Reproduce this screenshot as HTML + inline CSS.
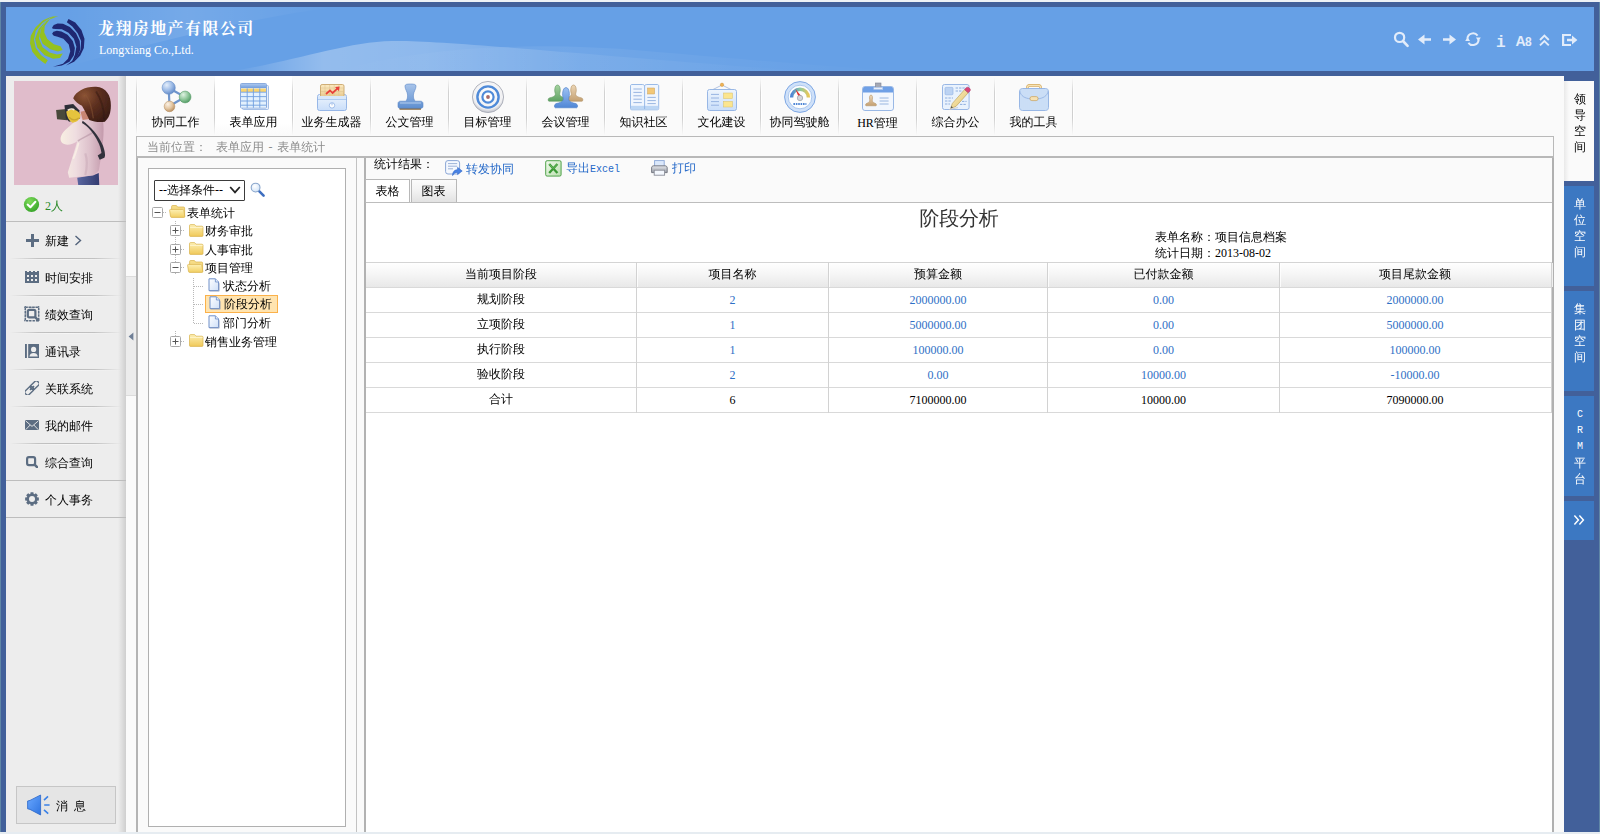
<!DOCTYPE html>
<html lang="zh-CN">
<head>
<meta charset="utf-8">
<title>龙翔房地产有限公司</title>
<style>
*{box-sizing:border-box;margin:0;padding:0}
html,body{width:1600px;height:834px;overflow:hidden}
body{position:relative;background:#42609a;font-family:"Liberation Serif","WenQuanYi Zen Hei","Noto Sans CJK SC",sans-serif;font-size:12px;line-height:14px;color:#000}
.abs{position:absolute}
#topstrip{left:0;top:0;width:1600px;height:2px;background:#eef2f6}
#botstrip{left:0;top:832px;width:1600px;height:2px;background:#e6ecf1}
#leftedge{left:0;top:2px;width:1px;height:830px;background:#5f86a6}
#rightedge{left:1599px;top:2px;width:1px;height:830px;background:#5f86a6}
#header{left:6px;top:7px;width:1588px;height:64px;background:#66a0e6;overflow:hidden}
#sidebar{left:6px;top:76px;width:120px;height:756px;background:#ededed}
#sideshadow{left:112px;top:0;width:8px;height:756px;background:linear-gradient(90deg,rgba(0,0,0,0),rgba(0,0,0,.13))}
#main{left:126px;top:76px;width:1438px;height:756px;background:#fafafa}
.t{position:absolute;white-space:nowrap;line-height:14px}
table th{font-weight:normal;background:linear-gradient(180deg,#fdfdfd,#f3f3f3 55%,#e6e6e6);border:1px solid #d2d2d2;padding:0;line-height:14px;vertical-align:middle}
table td{border:1px solid #dcdcdc;padding:0;text-align:center;color:#2a6fca;line-height:14px;vertical-align:middle;background:#fff}
table td.c0,table tr.tot td{color:#000}
</style>
</head>
<body>
<div id="topstrip" class="abs"></div>
<div id="leftedge" class="abs"></div>
<div id="rightedge" class="abs"></div>
<div id="header" class="abs"><svg class="abs" style="left:0;top:0" width="1588" height="64" viewBox="0 0 1588 64">
<defs>
<linearGradient id="sw1" gradientUnits="userSpaceOnUse" x1="226" y1="0" x2="800" y2="0"><stop offset="0" stop-color="#fff" stop-opacity="0"/><stop offset=".16" stop-color="#fff" stop-opacity=".30"/><stop offset=".34" stop-color="#fff" stop-opacity=".26"/><stop offset=".6" stop-color="#fff" stop-opacity=".08"/><stop offset="1" stop-color="#fff" stop-opacity="0"/></linearGradient>
<linearGradient id="sw2" gradientUnits="userSpaceOnUse" x1="60" y1="0" x2="330" y2="0"><stop offset="0" stop-color="#fff" stop-opacity="0"/><stop offset=".45" stop-color="#fff" stop-opacity=".10"/><stop offset="1" stop-color="#fff" stop-opacity="0"/></linearGradient>
<linearGradient id="sw3" gradientUnits="userSpaceOnUse" x1="330" y1="0" x2="900" y2="0"><stop offset="0" stop-color="#fff" stop-opacity="0"/><stop offset=".4" stop-color="#fff" stop-opacity=".07"/><stop offset="1" stop-color="#fff" stop-opacity="0"/></linearGradient>
</defs>
<path d="M60 0 L330 0 C250 10 160 32 60 60 Z" fill="url(#sw2)"/>
<path d="M226 64 C290 54 340 35 386 34 C440 33 600 50 800 64 Z" fill="url(#sw1)"/>
<path d="M330 64 C420 40 520 34 640 44 C760 54 820 60 900 64 Z" fill="url(#sw3)"/>
</svg>
<svg class="abs" style="left:14px;top:1px" width="80" height="64" viewBox="0 0 1042 834">
<g fill="#95c11f">
<polygon points="470,103 400,118 300,160 200,255 140,360 130,460 160,570 230,655 330,730 362,680 275,615 205,520 182,410 205,300 290,195 390,130"/>
<polygon points="335,172 245,275 195,400 225,515 320,615 430,662 520,650 558,592 480,606 385,580 295,510 248,400 265,285"/>
<polygon points="500,104 420,118 340,175 272,275 256,370 295,465 395,538 495,568 555,547 528,500 440,474 355,405 316,320 322,235 385,150"/>
</g>
<g fill="#1f2872">
<polygon points="418,335 435,310 480,298 540,305 620,350 688,430 715,520 702,615 645,700 545,750 430,766 560,725 625,660 655,565 635,475 565,402 490,375 440,360"/>
<polygon points="418,255 440,222 490,203 560,205 650,248 730,330 778,430 786,540 745,640 670,712 715,610 735,505 702,400 632,322 545,277 465,275 425,270"/>
<polygon points="632,142 720,190 800,288 840,400 832,520 785,620 705,700 600,748 735,648 790,545 796,430 752,330 682,242 610,186"/>
</g>
</svg>
<div class="t" style="left:92px;top:11px;font:bold 16px/22px 'Liberation Serif','Noto Serif CJK SC',serif;color:#fff;letter-spacing:1.4px">龙翔房地产有限公司</div>
<div class="t" style="left:93px;top:35px;font:12px/16px 'Liberation Serif',serif;color:#fff">Longxiang Co.,Ltd.</div>
<svg class="abs" style="left:1380px;top:20px" width="208" height="28" viewBox="1386 27 208 28" fill="none" stroke="#e2ecfa" stroke-width="2.2">
<circle cx="1399.6" cy="37.4" r="4.6"/><path d="M1403 41 L1407.6 45.8" stroke-linecap="round" stroke-width="2.6"/>
<g fill="#e2ecfa" stroke="none">
<path d="M1418 39.5 L1424.5 34.6 L1424.5 38.2 L1431 38.2 L1431 40.8 L1424.5 40.8 L1424.5 44.4 Z"/>
<path d="M1456 39.5 L1449.5 34.6 L1449.5 38.2 L1443 38.2 L1443 40.8 L1449.5 40.8 L1449.5 44.4 Z"/>
<path d="M1480.8 37.5 L1476 37.5 L1478.4 41.4 Z M1465.2 41 L1470 41 L1467.6 37.1 Z"/>
<path d="M1562 34 L1571 34 L1571 36 L1564.2 36 L1564.2 44 L1571 44 L1571 46 L1562 46 Z"/>
<path d="M1567 38.8 L1572 38.8 L1572 35.6 L1577.4 40 L1572 44.4 L1572 41.2 L1567 41.2 Z"/>
</g>
<path d="M1467.4 38.6 A5.7 5.7 0 0 1 1477.6 35.6 M1478.6 39.8 A5.7 5.7 0 0 1 1468.4 42.8" stroke-width="2"/>
<path d="M1540 40 L1544.4 35.6 L1548.8 40 M1540 45.4 L1544.4 41 L1548.8 45.4" stroke-width="1.9"/>
</svg>
<div class="t" style="left:1490px;top:27px;font:bold 16px/18px 'Liberation Mono',monospace;color:#e2ecfa">i</div>
<div class="t" style="left:1509.5px;top:25px;font:bold 14px/18px 'Liberation Sans',sans-serif;color:#e2ecfa;letter-spacing:-.6px">A<span style="font-size:12px">8</span></div>
</div>
<div id="sidebar" class="abs"><div id="sideshadow" class="abs"></div><svg class="abs" style="left:8px;top:5px" width="104" height="104" viewBox="30 22 773 773">
<defs>
<radialGradient id="hair" cx=".3" cy=".25" r=".85"><stop offset="0" stop-color="#8c5434"/><stop offset=".45" stop-color="#5e3020"/><stop offset="1" stop-color="#3a1c14"/></radialGradient>
<linearGradient id="jk" x1="0" y1="0" x2="1" y2="0"><stop offset="0" stop-color="#f8efe2"/><stop offset=".35" stop-color="#efdde0"/><stop offset=".7" stop-color="#dcbfca"/><stop offset="1" stop-color="#c49aac"/></linearGradient>
<linearGradient id="jeans" x1="0" y1="0" x2="1" y2="0"><stop offset="0" stop-color="#5a66a0"/><stop offset="1" stop-color="#333c70"/></linearGradient>
<filter id="bl" x="-5%" y="-5%" width="110%" height="110%"><feGaussianBlur stdDeviation="5"/></filter>
</defs>
<rect x="30" y="22" width="773" height="773" fill="#e0bccb"/>
<g filter="url(#bl)">
<path d="M500 742 L620 722 L660 705 L664 800 L508 800 Z" fill="url(#jeans)"/>
<path d="M520 300 L690 305 C705 400 690 520 660 690 L620 722 L440 742 L430 700 C455 620 480 540 500 470 C460 500 410 505 385 480 C365 450 380 410 430 370 C455 345 480 320 520 300 Z" fill="url(#jk)"/>
<path d="M505 468 C545 440 585 428 625 398" stroke="#b08e9e" stroke-width="12" fill="none" opacity=".55"/>
<path d="M560 560 C580 620 570 680 560 720" stroke="#c8a8b6" stroke-width="16" fill="none" opacity=".5"/>
<path d="M470 600 C490 560 500 520 510 480" stroke="#fff8e8" stroke-width="14" fill="none" opacity=".6"/>
<path d="M525 250 L575 240 L590 305 L540 312 Z" fill="#c98673"/>
<path d="M540 318 C600 360 660 430 690 500 C705 540 712 580 702 592 L667 607 L652 575 L680 558 C675 500 640 440 600 390 C575 360 555 345 535 335 Z" fill="#33333d"/>
<path d="M343 238 L420 230 L425 314 L350 307 Z" fill="#48483a"/>
<path d="M405 203 L470 193 L515 240 L520 300 L440 324 L415 300 Z" fill="#2f2f38"/>
<path d="M418 250 C450 222 502 232 522 270 C528 302 502 328 465 333 C438 316 424 290 418 250 Z" fill="#e6c33c"/>
<path d="M440 290 C460 315 490 318 512 296" stroke="#b8922a" stroke-width="10" fill="none" opacity=".6"/>
<path d="M430 240 C445 225 470 228 478 238" stroke="#f4e6d8" stroke-width="12" fill="none"/>
<path d="M470 150 C490 98 560 62 640 65 C715 70 752 130 750 205 C750 262 735 302 705 324 C668 332 620 324 590 312 C575 282 560 246 535 206 C505 190 485 175 470 150 Z" fill="url(#hair)"/>
<path d="M560 120 C590 160 610 230 620 300" stroke="#8a5636" stroke-width="10" fill="none" opacity=".5"/>
<path d="M640 100 C680 160 700 230 700 310" stroke="#2e1610" stroke-width="14" fill="none" opacity=".45"/>
</g>
</svg>
<svg class="abs" style="left:17px;top:120px" width="17" height="17" viewBox="0 0 17 17"><defs><radialGradient id="gc" cx=".4" cy=".3" r=".8"><stop offset="0" stop-color="#7fdc5a"/><stop offset="1" stop-color="#2f9e24"/></radialGradient></defs><circle cx="8.5" cy="8.5" r="7.6" fill="url(#gc)"/><path d="M4.6 8.6 L7.4 11.2 L12.4 5.8" fill="none" stroke="#fff" stroke-width="2" stroke-linecap="round" stroke-linejoin="round"/></svg>
<div class="t" style="left:39px;top:123px;color:#2a8a2a">2人</div>
<div class="abs" style="left:0;top:144.5px;width:120px;height:1px;background:#bdbdbd"></div>
<div class="abs" style="left:4px;top:182.0px;width:112px;height:1px;background:linear-gradient(90deg,rgba(190,190,190,0),#c2c2c2 25%,#bcbcbc 50%,#c2c2c2 75%,rgba(190,190,190,0))"></div>
<div class="abs" style="left:4px;top:183.0px;width:112px;height:1px;background:linear-gradient(90deg,rgba(255,255,255,0),rgba(255,255,255,.5) 50%,rgba(255,255,255,0))"></div>
<div class="abs" style="left:4px;top:219.0px;width:112px;height:1px;background:linear-gradient(90deg,rgba(190,190,190,0),#c2c2c2 25%,#bcbcbc 50%,#c2c2c2 75%,rgba(190,190,190,0))"></div>
<div class="abs" style="left:4px;top:220.0px;width:112px;height:1px;background:linear-gradient(90deg,rgba(255,255,255,0),rgba(255,255,255,.5) 50%,rgba(255,255,255,0))"></div>
<div class="abs" style="left:4px;top:256.0px;width:112px;height:1px;background:linear-gradient(90deg,rgba(190,190,190,0),#c2c2c2 25%,#bcbcbc 50%,#c2c2c2 75%,rgba(190,190,190,0))"></div>
<div class="abs" style="left:4px;top:257.0px;width:112px;height:1px;background:linear-gradient(90deg,rgba(255,255,255,0),rgba(255,255,255,.5) 50%,rgba(255,255,255,0))"></div>
<div class="abs" style="left:4px;top:293.0px;width:112px;height:1px;background:linear-gradient(90deg,rgba(190,190,190,0),#c2c2c2 25%,#bcbcbc 50%,#c2c2c2 75%,rgba(190,190,190,0))"></div>
<div class="abs" style="left:4px;top:294.0px;width:112px;height:1px;background:linear-gradient(90deg,rgba(255,255,255,0),rgba(255,255,255,.5) 50%,rgba(255,255,255,0))"></div>
<div class="abs" style="left:4px;top:330.0px;width:112px;height:1px;background:linear-gradient(90deg,rgba(190,190,190,0),#c2c2c2 25%,#bcbcbc 50%,#c2c2c2 75%,rgba(190,190,190,0))"></div>
<div class="abs" style="left:4px;top:331.0px;width:112px;height:1px;background:linear-gradient(90deg,rgba(255,255,255,0),rgba(255,255,255,.5) 50%,rgba(255,255,255,0))"></div>
<div class="abs" style="left:4px;top:367.0px;width:112px;height:1px;background:linear-gradient(90deg,rgba(190,190,190,0),#c2c2c2 25%,#bcbcbc 50%,#c2c2c2 75%,rgba(190,190,190,0))"></div>
<div class="abs" style="left:4px;top:368.0px;width:112px;height:1px;background:linear-gradient(90deg,rgba(255,255,255,0),rgba(255,255,255,.5) 50%,rgba(255,255,255,0))"></div>
<div class="abs" style="left:0;top:404.0px;width:120px;height:1px;background:#bdbdbd"></div>
<div class="abs" style="left:0;top:440.5px;width:120px;height:1px;background:#bdbdbd"></div>
<svg class="abs" style="left:20px;top:158px" width="13" height="13" viewBox="0 0 13 13"><path d="M5 0h3v5h5v3h-5v5h-3v-5h-5v-3h5z" fill="#5c6d82"/></svg>
<div class="t" style="left:39px;top:158px;">新建</div>
<svg class="abs" style="left:68px;top:159px" width="8" height="11" viewBox="0 0 8 11"><path d="M1.5 1 L6.5 5.5 L1.5 10" fill="none" stroke="#52627a" stroke-width="1.4"/></svg>
<svg class="abs" style="left:19px;top:195px" width="14" height="12" viewBox="0 0 14 12"><path d="M0 0h2v1h2v-1h2v1h2v-1h2v1h2v-1h2v12h-14z" fill="#5c6d82"/><g fill="#ededed"><rect x="2" y="4" width="2" height="2"/><rect x="6" y="4" width="2" height="2"/><rect x="10" y="4" width="2" height="2"/><rect x="2" y="8" width="2" height="2"/><rect x="6" y="8" width="2" height="2"/><rect x="10" y="8" width="2" height="2"/></g></svg>
<div class="t" style="left:39px;top:195px;">时间安排</div>
<svg class="abs" style="left:18px;top:230px" width="16" height="16" viewBox="0 0 16 16"><rect x="1.3" y="1.3" width="13.4" height="13.4" fill="none" stroke="#5c6d82" stroke-width="1.5" stroke-dasharray="2.4 1"/><path d="M0 1.3h16M0 14.7h7M1.3 0v16M14.7 0v8" stroke="#5c6d82" stroke-width="1.1" stroke-dasharray="1 2.4"/><rect x="3.8" y="3.8" width="7.6" height="7.6" rx="1.6" fill="none" stroke="#5c6d82" stroke-width="2.2"/><path d="M10.6 10.6 L15 15" stroke="#5c6d82" stroke-width="2.4"/></svg>
<div class="t" style="left:39px;top:232px;">绩效查询</div>
<svg class="abs" style="left:19px;top:268px" width="14" height="14" viewBox="0 0 14 14"><rect x="0" y="0" width="1.9" height="14" fill="#5c6d82"/><rect x="3.2" y="0" width="10.8" height="14" fill="#5c6d82"/><circle cx="8.6" cy="5.4" r="2.6" fill="#ededed"/><path d="M4.4 12.6 C4.8 10 6.4 9 8.6 9 C10.8 9 12.4 10 12.8 12.6 Z" fill="#ededed"/></svg>
<div class="t" style="left:39px;top:269px;">通讯录</div>
<svg class="abs" style="left:19px;top:305px" width="14" height="14" viewBox="0 0 14 14"><g transform="rotate(-45 7 7)" fill="none" stroke="#5c6d82" stroke-width="1.4"><rect x="-1.6" y="4.4" width="9.4" height="5.2" rx="1.6"/><rect x="6.2" y="4.4" width="9.4" height="5.2" rx="1.6"/><path d="M4.2 7h5.6" stroke-width="1.8"/></g></svg>
<div class="t" style="left:39px;top:306px;">关联系统</div>
<svg class="abs" style="left:19px;top:344px" width="14" height="10.4" viewBox="0 0 14 10.4"><rect width="14" height="10.4" rx=".8" fill="#5c6d82"/><path d="M.6 .8 L7 6.4 L13.4 .8 M.6 9.8 L5.2 5 M13.4 9.8 L8.8 5" fill="none" stroke="#ededed" stroke-width=".9"/></svg>
<div class="t" style="left:39px;top:343px;">我的邮件</div>
<svg class="abs" style="left:20px;top:380px" width="12.4" height="12.4" viewBox="0 0 12.4 12.4"><rect x="1.1" y="1.1" width="8" height="8" rx="1.8" fill="none" stroke="#5c6d82" stroke-width="2.2"/><path d="M8.6 8.6 L11.4 11.4" stroke="#5c6d82" stroke-width="2.6" stroke-linecap="round"/></svg>
<div class="t" style="left:39px;top:380px;">综合查询</div>
<svg class="abs" style="left:19px;top:416px" width="14" height="14" viewBox="0 0 14 14"><polygon points="13.86,5.61 13.86,8.39 12.01,8.72 11.76,9.33 12.83,10.87 10.87,12.83 9.33,11.76 8.72,12.01 8.39,13.86 5.61,13.86 5.28,12.01 4.67,11.76 3.13,12.83 1.17,10.87 2.24,9.33 1.99,8.72 0.14,8.39 0.14,5.61 1.99,5.28 2.24,4.67 1.17,3.13 3.13,1.17 4.67,2.24 5.28,1.99 5.61,0.14 8.39,0.14 8.72,1.99 9.33,2.24 10.87,1.17 12.83,3.13 11.76,4.67 12.01,5.28" fill="#5c6d82"/><circle cx="7" cy="7" r="3" fill="#ededed"/></svg>
<div class="t" style="left:39px;top:417px;">个人事务</div>
<div class="abs" style="left:10px;top:710px;width:100px;height:38px;border:1px solid #c6c6c6;background:#e5e5e5"></div>
<svg class="abs" style="left:21px;top:718px" width="24" height="22" viewBox="0 0 24 22"><defs><linearGradient id="spk" x1="0" y1="0" x2="1" y2="1"><stop offset="0" stop-color="#6aa8ff"/><stop offset="1" stop-color="#2f74e0"/></linearGradient></defs><path d="M.6 7 L3 6.4 L13.6 1 L13.6 21 L3 15.4 L.6 14.8 Z" fill="url(#spk)" stroke="#2b66c8" stroke-width=".8" stroke-linejoin="round"/><path d="M17 6.2 L21 2.4 M17.2 11 H22.6 M17 15.8 L21.2 19.6" stroke="#3a80e6" stroke-width="1.6" fill="none"/></svg>
<div class="t" style="left:50px;top:723px;font-family:'Liberation Sans','WenQuanYi Zen Hei',sans-serif;letter-spacing:6px">消息</div></div>
<div id="main" class="abs"><div class="abs" style="left:89px;top:0px;width:77px;height:59px;background:linear-gradient(180deg,#fff,#fff 80%,#fafafa)"></div>
<div class="abs" style="left:10px;top:2px;width:1px;height:57px;background:linear-gradient(180deg,rgba(200,200,200,0),#d2d2d2 25%,#cfcfcf 70%,rgba(200,200,200,0))"></div>
<div class="abs" style="left:11px;top:2px;width:1px;height:57px;background:linear-gradient(180deg,rgba(255,255,255,0),#fff 30%,#fff 70%,rgba(255,255,255,0))"></div>
<div class="abs" style="left:88px;top:2px;width:1px;height:57px;background:linear-gradient(180deg,rgba(200,200,200,0),#d2d2d2 25%,#cfcfcf 70%,rgba(200,200,200,0))"></div>
<div class="abs" style="left:89px;top:2px;width:1px;height:57px;background:linear-gradient(180deg,rgba(255,255,255,0),#fff 30%,#fff 70%,rgba(255,255,255,0))"></div>
<div class="abs" style="left:166px;top:2px;width:1px;height:57px;background:linear-gradient(180deg,rgba(200,200,200,0),#d2d2d2 25%,#cfcfcf 70%,rgba(200,200,200,0))"></div>
<div class="abs" style="left:167px;top:2px;width:1px;height:57px;background:linear-gradient(180deg,rgba(255,255,255,0),#fff 30%,#fff 70%,rgba(255,255,255,0))"></div>
<div class="abs" style="left:244px;top:2px;width:1px;height:57px;background:linear-gradient(180deg,rgba(200,200,200,0),#d2d2d2 25%,#cfcfcf 70%,rgba(200,200,200,0))"></div>
<div class="abs" style="left:245px;top:2px;width:1px;height:57px;background:linear-gradient(180deg,rgba(255,255,255,0),#fff 30%,#fff 70%,rgba(255,255,255,0))"></div>
<div class="abs" style="left:322px;top:2px;width:1px;height:57px;background:linear-gradient(180deg,rgba(200,200,200,0),#d2d2d2 25%,#cfcfcf 70%,rgba(200,200,200,0))"></div>
<div class="abs" style="left:323px;top:2px;width:1px;height:57px;background:linear-gradient(180deg,rgba(255,255,255,0),#fff 30%,#fff 70%,rgba(255,255,255,0))"></div>
<div class="abs" style="left:400px;top:2px;width:1px;height:57px;background:linear-gradient(180deg,rgba(200,200,200,0),#d2d2d2 25%,#cfcfcf 70%,rgba(200,200,200,0))"></div>
<div class="abs" style="left:401px;top:2px;width:1px;height:57px;background:linear-gradient(180deg,rgba(255,255,255,0),#fff 30%,#fff 70%,rgba(255,255,255,0))"></div>
<div class="abs" style="left:478px;top:2px;width:1px;height:57px;background:linear-gradient(180deg,rgba(200,200,200,0),#d2d2d2 25%,#cfcfcf 70%,rgba(200,200,200,0))"></div>
<div class="abs" style="left:479px;top:2px;width:1px;height:57px;background:linear-gradient(180deg,rgba(255,255,255,0),#fff 30%,#fff 70%,rgba(255,255,255,0))"></div>
<div class="abs" style="left:556px;top:2px;width:1px;height:57px;background:linear-gradient(180deg,rgba(200,200,200,0),#d2d2d2 25%,#cfcfcf 70%,rgba(200,200,200,0))"></div>
<div class="abs" style="left:557px;top:2px;width:1px;height:57px;background:linear-gradient(180deg,rgba(255,255,255,0),#fff 30%,#fff 70%,rgba(255,255,255,0))"></div>
<div class="abs" style="left:634px;top:2px;width:1px;height:57px;background:linear-gradient(180deg,rgba(200,200,200,0),#d2d2d2 25%,#cfcfcf 70%,rgba(200,200,200,0))"></div>
<div class="abs" style="left:635px;top:2px;width:1px;height:57px;background:linear-gradient(180deg,rgba(255,255,255,0),#fff 30%,#fff 70%,rgba(255,255,255,0))"></div>
<div class="abs" style="left:712px;top:2px;width:1px;height:57px;background:linear-gradient(180deg,rgba(200,200,200,0),#d2d2d2 25%,#cfcfcf 70%,rgba(200,200,200,0))"></div>
<div class="abs" style="left:713px;top:2px;width:1px;height:57px;background:linear-gradient(180deg,rgba(255,255,255,0),#fff 30%,#fff 70%,rgba(255,255,255,0))"></div>
<div class="abs" style="left:790px;top:2px;width:1px;height:57px;background:linear-gradient(180deg,rgba(200,200,200,0),#d2d2d2 25%,#cfcfcf 70%,rgba(200,200,200,0))"></div>
<div class="abs" style="left:791px;top:2px;width:1px;height:57px;background:linear-gradient(180deg,rgba(255,255,255,0),#fff 30%,#fff 70%,rgba(255,255,255,0))"></div>
<div class="abs" style="left:868px;top:2px;width:1px;height:57px;background:linear-gradient(180deg,rgba(200,200,200,0),#d2d2d2 25%,#cfcfcf 70%,rgba(200,200,200,0))"></div>
<div class="abs" style="left:869px;top:2px;width:1px;height:57px;background:linear-gradient(180deg,rgba(255,255,255,0),#fff 30%,#fff 70%,rgba(255,255,255,0))"></div>
<div class="abs" style="left:946px;top:2px;width:1px;height:57px;background:linear-gradient(180deg,rgba(200,200,200,0),#d2d2d2 25%,#cfcfcf 70%,rgba(200,200,200,0))"></div>
<div class="abs" style="left:947px;top:2px;width:1px;height:57px;background:linear-gradient(180deg,rgba(255,255,255,0),#fff 30%,#fff 70%,rgba(255,255,255,0))"></div>
<svg class="abs" style="left:0;top:0" width="1000" height="60" viewBox="126 76 1000 60"><defs>
<radialGradient id="sB" cx=".35" cy=".3" r=".75"><stop offset="0" stop-color="#e4eefb"/><stop offset=".55" stop-color="#9dbbe6"/><stop offset="1" stop-color="#5f87c6"/></radialGradient>
<radialGradient id="sG" cx=".35" cy=".3" r=".75"><stop offset="0" stop-color="#dff2e2"/><stop offset=".55" stop-color="#8fc79a"/><stop offset="1" stop-color="#4f9a62"/></radialGradient>
<radialGradient id="sT" cx=".35" cy=".3" r=".75"><stop offset="0" stop-color="#fbf1e4"/><stop offset=".55" stop-color="#e3c6a2"/><stop offset="1" stop-color="#b98d5e"/></radialGradient>
<linearGradient id="bh" x1="0" y1="0" x2="0" y2="1"><stop offset="0" stop-color="#a9c6ee"/><stop offset="1" stop-color="#6f9bdc"/></linearGradient>
<linearGradient id="lb" x1="0" y1="0" x2="0" y2="1"><stop offset="0" stop-color="#eef5fd"/><stop offset="1" stop-color="#c9defa"/></linearGradient>
<linearGradient id="st" x1="0" y1="0" x2="0" y2="1"><stop offset="0" stop-color="#a8c4ea"/><stop offset="1" stop-color="#5f8fd0"/></linearGradient>
<linearGradient id="tan" x1="0" y1="0" x2="0" y2="1"><stop offset="0" stop-color="#fbe9c0"/><stop offset="1" stop-color="#e9c98c"/></linearGradient>
<radialGradient id="tg" cx=".5" cy=".4" r=".6"><stop offset="0" stop-color="#ffffff"/><stop offset=".8" stop-color="#f0f0f2"/><stop offset="1" stop-color="#b9bcc6"/></radialGradient>
<linearGradient id="arc" x1="0" y1="0" x2="1" y2="0"><stop offset="0" stop-color="#4f86d6"/><stop offset=".5" stop-color="#8cc9a0"/><stop offset="1" stop-color="#e7c85a"/></linearGradient>
<linearGradient id="pGreen" x1="0" y1="0" x2="0" y2="1"><stop offset="0" stop-color="#a6d3a0"/><stop offset="1" stop-color="#5fa263"/></linearGradient>
<linearGradient id="pTan" x1="0" y1="0" x2="0" y2="1"><stop offset="0" stop-color="#ecd6b6"/><stop offset="1" stop-color="#c4a072"/></linearGradient>
<linearGradient id="pBlue" x1="0" y1="0" x2="0" y2="1"><stop offset="0" stop-color="#9cc0f2"/><stop offset="1" stop-color="#4f86d6"/></linearGradient>
<linearGradient id="pencil" x1="0" y1="0" x2="1" y2="1"><stop offset="0" stop-color="#fdf3c8"/><stop offset="1" stop-color="#e2c069"/></linearGradient>
</defs><g><path d="M168.7 88 L169.5 106 M168.7 88 L185 97 M169.5 106 L185 97" stroke="#6f95cc" stroke-width="2.2" fill="none"/><circle cx="168.7" cy="87.7" r="6.6" fill="url(#sB)" stroke="#6a90c8" stroke-width=".6"/><circle cx="185.1" cy="97" r="5.9" fill="url(#sG)" stroke="#5fa06f" stroke-width=".6"/><circle cx="169.5" cy="106.4" r="5.3" fill="url(#sT)" stroke="#b99468" stroke-width=".6"/></g><g><rect x="242.5" y="85.5" width="26" height="24" rx="1" fill="#e7f0fc" stroke="#8fb0e0" stroke-width=".8"/><rect x="240.5" y="83.5" width="26" height="24.5" rx="1" fill="#f4f9ff" stroke="#7ea3da" stroke-width=".9"/><rect x="241" y="84" width="25" height="4.2" fill="url(#bh)"/><rect x="241" y="88.6" width="25" height="3.4" fill="#fbd56e"/><rect x="241" y="92.4" width="25" height="15" fill="#e3f1fd"/><path d="M241 92.2h25M241 96.6h25M241 101h25M241 105.2h25M247.2 88.4v19.4M253.4 88.4v19.4M259.8 88.4v19.4" stroke="#6f9fe0" stroke-width=".9" fill="none"/></g><g><rect x="317.5" y="94.5" width="29" height="16" rx="2" fill="url(#lb)" stroke="#8db0e4" stroke-width=".9"/><rect x="320.5" y="84.5" width="23.5" height="14" rx="1.6" fill="url(#tan)" stroke="#c9a56a" stroke-width=".9"/><path d="M321 88h22.5M321 91.5h22.5M321 95h22.5M325 85v13M329.6 85v13M334.2 85v13M338.8 85v13" stroke="#dcc08c" stroke-width=".5"/><path d="M317.5 99.5h29" stroke="#8db0e4" stroke-width=".9"/><rect x="318" y="96" width="28" height="3.4" fill="#d8e8fb"/><path d="M326 94 L330 90.5 L332.6 93 L337.6 88.4" stroke="#e8403a" stroke-width="1.7" fill="none"/><path d="M335 87 L339.6 86.6 L339 91.2 Z" fill="#e8403a"/><circle cx="332" cy="105.4" r="2.7" fill="#fff" stroke="#8db0e4" stroke-width=".8"/><path d="M332 103v2.4" stroke="#8db0e4" stroke-width=".8"/></g><g><rect x="399.5" y="107.6" width="21.5" height="2.2" rx=".6" fill="#8a6a3c"/><path d="M405 86.2 C405 84.2 407 84 410.4 84 C413.8 84 416 84.2 416 86.2 C416 89.4 413.6 91.6 413.4 95 C413.3 98 414 100 415.4 101.2 L420.6 101.2 C422.2 101.2 423 102.2 423 103.6 L423 106.4 C423 107.6 422.2 108.2 421 108.2 L400 108.2 C398.8 108.2 398 107.6 398 106.4 L398 103.6 C398 102.2 398.8 101.2 400.4 101.2 L405.6 101.2 C407 100 407.7 98 407.6 95 C407.4 91.6 405 89.4 405 86.2 Z" fill="url(#st)" stroke="#5a86c6" stroke-width=".6"/><path d="M400 103h21" stroke="#c6daf4" stroke-width="1" opacity=".8"/></g><g><circle cx="488" cy="97" r="15.6" fill="url(#tg)" stroke="#a9adb8" stroke-width=".9"/><circle cx="488" cy="97" r="10.6" fill="none" stroke="#4f8ad8" stroke-width="2.4"/><circle cx="488" cy="97" r="5.6" fill="#fff" stroke="#4f8ad8" stroke-width="2.2"/><circle cx="488" cy="97" r="1.9" fill="#a86a6a"/></g><g><path d="M557.5 85.0 C554.4 85.0 554.4 91.7 555.2 93.0 C555.7 95.4 555.1 96.6 549.5 97.9 L548.6 98.5 C548.0 99.1 548.0 100.9 548.9 101.2 L566.1 101.2 C567.0 100.9 567.0 99.1 566.4 98.5 L565.5 97.9 C559.9 96.6 559.3 95.4 559.8 93.0 L559.8 93.0 C560.6 91.7 560.6 85.0 557.5 85.0 Z" fill="url(#pGreen)" stroke="#5a965c" stroke-width=".6"/><path d="M573.5 85.0 C570.4 85.0 570.4 91.7 571.2 93.0 C571.7 95.4 571.1 96.6 565.5 97.9 L564.6 98.5 C564.0 99.1 564.0 100.9 564.9 101.2 L582.1 101.2 C583.0 100.9 583.0 99.1 582.4 98.5 L581.5 97.9 C575.9 96.6 575.3 95.4 575.8 93.0 L575.8 93.0 C576.6 91.7 576.6 85.0 573.5 85.0 Z" fill="url(#pTan)" stroke="#b08e60" stroke-width=".6"/><path d="M566.0 87.6 C562.2 87.6 562.2 96.0 563.1 97.5 C563.7 100.5 563.0 102.1 556.1 103.6 L555.0 104.4 C554.2 105.1 554.2 107.4 555.3 107.8 L576.7 107.8 C577.8 107.4 577.8 105.1 577.0 104.4 L575.9 103.6 C569.0 102.1 568.3 100.5 568.9 97.5 L568.9 97.5 C569.8 96.0 569.8 87.6 566.0 87.6 Z" fill="url(#pBlue)" stroke="#4a7cc8" stroke-width=".6"/></g><g><path d="M630.5 86 C630.5 85 631 84.5 632 84.5 L642.4 84.5 C643.4 84.5 644.4 85 644.6 86 C644.8 85 645.8 84.5 646.8 84.5 L657.2 84.5 C658.2 84.5 658.7 85 658.7 86 L658.7 108.6 C658.7 109.4 658.2 109.8 657.4 109.8 L631.8 109.8 C631 109.8 630.5 109.4 630.5 108.6 Z" fill="#f0f6fe" stroke="#8fb2e4" stroke-width=".9"/><rect x="631" y="105.8" width="27.2" height="3.6" fill="#bcd6f4"/><path d="M644.6 86v23" stroke="#8fb2e4" stroke-width=".9"/><path d="M633.4 89h8.4M633.4 92.4h8.4M633.4 95.8h8.4M633.4 99.2h8.4M633.4 102.6h8.4M647.4 97.4h8.4M647.4 100.6h8.4M647.4 103.6h8.4" stroke="#8eaede" stroke-width=".9"/><rect x="647.6" y="88" width="7" height="6" fill="#f3c877" stroke="#c9a05a" stroke-width=".5"/></g><g><path d="M713 89.5 L722 85 L731 89.5" stroke="#9fb4d8" stroke-width=".8" fill="none"/><circle cx="722" cy="84.8" r="1.7" fill="#f0b352" stroke="#cf9338" stroke-width=".5"/><rect x="707.5" y="89.5" width="29" height="21" rx="2" fill="url(#lb)" stroke="#8fb0e2" stroke-width=".9"/><path d="M711 94.4h8M711 98h8M711 101.6h8M711 105.2h8" stroke="#8eaede" stroke-width=".9"/><rect x="723.5" y="93" width="9" height="5.6" fill="#fbe58f" stroke="#d8c06a" stroke-width=".5"/><rect x="723.5" y="101.4" width="9" height="5.6" fill="#fbe58f" stroke="#d8c06a" stroke-width=".5"/></g><g><circle cx="800" cy="97" r="15.4" fill="#cfe1f9" stroke="#7fa8e4" stroke-width="1"/><circle cx="800" cy="97" r="11.8" fill="#fdfefe" stroke="#9dbdea" stroke-width=".8"/><path d="M791.6 97.6 A8.4 8.4 0 0 1 808.4 97.6" fill="none" stroke="url(#arc)" stroke-width="3.4"/><path d="M795.4 89 L801.6 96.4 L799 98 Z" fill="#e03030"/><circle cx="800" cy="98" r="2.7" fill="#d4d6da" stroke="#9a9da6" stroke-width=".7"/><path d="M793.4 104h13" stroke="#4f86d6" stroke-width="2" stroke-dasharray="1.6 .8"/></g><g><rect x="862.5" y="86.5" width="31" height="24" rx="2.4" fill="#f2f7fe" stroke="#8fb0e2" stroke-width=".9"/><path d="M863 89 C863 87.6 863.8 87 865 87 L891 87 C892.2 87 893 87.6 893 89 L893 92.6 L863 92.6 Z" fill="#6fa0e6"/><rect x="875.4" y="83" width="5.6" height="4.6" fill="#a4a9b6" stroke="#7f8494" stroke-width=".6"/><rect x="873.6" y="87.2" width="9.2" height="2.4" fill="#e8eef8" stroke="#8fb0e2" stroke-width=".4"/><path d="M871 95 C869.4 95 869.2 97.6 869.6 99.4 C869.8 100.6 869.6 101.6 868.6 102.4 L866 103.8 C865.4 104.2 865.4 105.6 866 105.8 L876 105.8 C876.6 105.6 876.6 104.2 876 103.8 L873.4 102.4 C872.4 101.6 872.2 100.6 872.4 99.4 C872.8 97.6 872.6 95 871 95 Z" fill="url(#pTan)" stroke="#b08e60" stroke-width=".5"/><path d="M879.6 98h9M879.6 101h9M879.6 104h9" stroke="#8eaede" stroke-width=".9"/></g><g><rect x="942.5" y="84.5" width="26.6" height="25" rx="2" fill="#e9f2fd" stroke="#8fb0e2" stroke-width=".9"/><rect x="945" y="87.4" width="8" height="7.4" rx="1" fill="#bcd3f3" stroke="#8fb0e2" stroke-width=".6"/><path d="M955.6 88h10.6M955.6 91h7M945 98h8M945 101h6M945 104h5M962 101.4h4.6M960 104.4h6.6" stroke="#8eaede" stroke-width="1" stroke-dasharray="2.4 1"/><path d="M950.6 108.4 L952.4 103.4 L964.6 89.6 L968.2 92.8 L956 106.4 Z" fill="url(#pencil)" stroke="#b99a4c" stroke-width=".6"/><path d="M964.6 89.6 L966.2 87.8 C967 87 968.2 87 969 87.8 L969.8 88.6 C970.6 89.4 970.6 90.4 969.8 91.2 L968.2 92.8 Z" fill="#d8457a" stroke="#a82f5c" stroke-width=".5"/><path d="M950.6 108.4 L951.4 106 L953 107.6 Z" fill="#555"/><path d="M949 109.6 L958 107.6" stroke="#c5c5c5" stroke-width=".8"/></g><g><path d="M1027.4 90.6 L1027.4 87.6 C1027.4 86.2 1028.4 85.4 1029.8 85.4 L1038.2 85.4 C1039.6 85.4 1040.6 86.2 1040.6 87.6 L1040.6 90.6" fill="none" stroke="#d5ab62" stroke-width="2.6"/><path d="M1027.4 90.6 L1027.4 87.6 C1027.4 86.2 1028.4 85.4 1029.8 85.4 L1038.2 85.4 C1039.6 85.4 1040.6 86.2 1040.6 87.6 L1040.6 90.6" fill="none" stroke="#f6e2b4" stroke-width="1.2"/><rect x="1019.5" y="88.5" width="29" height="22" rx="3" fill="#d9e8fa" stroke="#8fb0e2" stroke-width=".9"/><path d="M1021 89v21M1023 89v21M1025 89v21M1027 89v21M1029 89v21M1031 89v21M1033 89v21M1035 89v21M1037 89v21M1039 89v21M1041 89v21M1043 89v21M1045 89v21M1047 89v21" stroke="#b9d2f2" stroke-width=".9"/><path d="M1019.8 91 C1020.6 96 1025 98.4 1030.4 98.8 M1048.2 91 C1047.4 96 1043 98.4 1037.6 98.8" fill="none" stroke="#8fb0e2" stroke-width=".8"/><rect x="1030" y="96.6" width="8" height="4" rx="1.8" fill="#f6e2b4" stroke="#c9a05a" stroke-width=".7"/></g></svg>
<div class="t" style="left:10.5px;top:39px;width:78px;text-align:center;">协同工作</div>
<div class="t" style="left:88.5px;top:39px;width:78px;text-align:center;">表单应用</div>
<div class="t" style="left:166.5px;top:39px;width:78px;text-align:center;">业务生成器</div>
<div class="t" style="left:244.5px;top:39px;width:78px;text-align:center;">公文管理</div>
<div class="t" style="left:322.5px;top:39px;width:78px;text-align:center;">目标管理</div>
<div class="t" style="left:400.5px;top:39px;width:78px;text-align:center;">会议管理</div>
<div class="t" style="left:478.5px;top:39px;width:78px;text-align:center;">知识社区</div>
<div class="t" style="left:556.5px;top:39px;width:78px;text-align:center;">文化建设</div>
<div class="t" style="left:634.5px;top:39px;width:78px;text-align:center;">协同驾驶舱</div>
<div class="t" style="left:712.5px;top:40px;width:78px;text-align:center;">HR管理</div>
<div class="t" style="left:790.5px;top:39px;width:78px;text-align:center;">综合办公</div>
<div class="t" style="left:868.5px;top:39px;width:78px;text-align:center;">我的工具</div>
<div class="abs" style="left:10px;top:60px;width:1418px;height:22px;border:1px solid #b9b9b9;border-bottom:2px solid #b8b8b8;background:#fafafa"></div>
<div class="t" style="left:21px;top:64px;color:#8c8c8c">当前位置：</div>
<div class="t" style="left:90px;top:64px;color:#8c8c8c;word-spacing:1.6px">表单应用 - 表单统计</div>
<div class="abs" style="left:10px;top:82px;width:221px;height:674px;border-left:2px solid #b4b4b4;border-right:1px solid #c2c2c2;background:#fafafa"></div>
<div class="abs" style="left:22px;top:92px;width:198px;height:659px;border:1px solid #b0b0b0;background:#fff"></div>
<div class="abs" style="left:28px;top:103.5px;width:91px;height:21px;border:1px solid #3c3c3c;background:#fff;border-radius:1px"></div>
<div class="t" style="left:33px;top:107px;letter-spacing:0">--选择条件--</div>
<svg class="abs" style="left:103px;top:109px" width="12" height="10" viewBox="0 0 12 10"><path d="M1.2 2 L6 7.4 L10.8 2" fill="none" stroke="#222" stroke-width="1.7"/></svg>
<svg class="abs" style="left:124px;top:106px" width="16" height="16" viewBox="0 0 16 16"><defs><radialGradient id="mg" cx=".4" cy=".35" r=".7"><stop offset="0" stop-color="#fff"/><stop offset="1" stop-color="#cfe2f8"/></radialGradient></defs><path d="M8.6 8.6 L13.6 13.6" stroke="#3f6fc0" stroke-width="2.6" stroke-linecap="round"/><circle cx="5.6" cy="5.6" r="4.4" fill="url(#mg)" stroke="#8aa6cc" stroke-width="1.1"/></svg>
<div class="abs" style="left:37px;top:136px;width:4px;height:1px;background:repeating-linear-gradient(90deg,#b8b8b8 0 1px,transparent 1px 2px)"></div>
<div class="abs" style="left:49px;top:145px;width:1px;height:54px;background:repeating-linear-gradient(180deg,#b8b8b8 0 1px,transparent 1px 2px)"></div>
<div class="abs" style="left:55px;top:154px;width:4px;height:1px;background:repeating-linear-gradient(90deg,#b8b8b8 0 1px,transparent 1px 2px)"></div>
<div class="abs" style="left:55px;top:173px;width:4px;height:1px;background:repeating-linear-gradient(90deg,#b8b8b8 0 1px,transparent 1px 2px)"></div>
<div class="abs" style="left:55px;top:191px;width:4px;height:1px;background:repeating-linear-gradient(90deg,#b8b8b8 0 1px,transparent 1px 2px)"></div>
<div class="abs" style="left:49px;top:255px;width:1px;height:5px;background:repeating-linear-gradient(180deg,#b8b8b8 0 1px,transparent 1px 2px)"></div>
<div class="abs" style="left:55px;top:265px;width:4px;height:1px;background:repeating-linear-gradient(90deg,#b8b8b8 0 1px,transparent 1px 2px)"></div>
<div class="abs" style="left:67px;top:202px;width:1px;height:45px;background:repeating-linear-gradient(180deg,#b8b8b8 0 1px,transparent 1px 2px)"></div>
<div class="abs" style="left:68px;top:210px;width:9px;height:1px;background:repeating-linear-gradient(90deg,#b8b8b8 0 1px,transparent 1px 2px)"></div>
<div class="abs" style="left:68px;top:228px;width:9px;height:1px;background:repeating-linear-gradient(90deg,#b8b8b8 0 1px,transparent 1px 2px)"></div>
<div class="abs" style="left:68px;top:247px;width:9px;height:1px;background:repeating-linear-gradient(90deg,#b8b8b8 0 1px,transparent 1px 2px)"></div>
<svg class="abs" style="left:26px;top:131px" width="11" height="11" viewBox="0 0 11 11"><rect x=".5" y=".5" width="10" height="10" rx="1" fill="#fff" stroke="#a8a8a8"/><path d="M2.5 5.5h6" stroke="#555" stroke-width="1"/></svg>
<svg class="abs" style="left:42.6px;top:128.6px" width="17" height="13" viewBox="0 0 17 13"><defs><linearGradient id="fo" x1="0" y1="0" x2="0" y2="1"><stop offset="0" stop-color="#fdf0b4"/><stop offset="1" stop-color="#f2cf62"/></linearGradient></defs><path d="M2.6 1.4 C2.6 .8 3 .5 3.6 .5 L7.4 .5 L8.6 2 L14.6 2 C15.2 2 15.6 2.4 15.6 3 L15.6 11.6 L2.6 11.6 Z" fill="#f6dc86" stroke="#d9b24a" stroke-width=".7"/><path d="M.6 5.4 C.5 4.8 .9 4.4 1.5 4.4 L13.6 4.4 C14.2 4.4 14.7 4.8 14.8 5.4 L15.8 11.4 C15.9 12 15.5 12.4 14.9 12.4 L2.6 12.4 C2 12.4 1.6 12 1.5 11.4 Z" fill="url(#fo)" stroke="#d9b24a" stroke-width=".7"/></svg>
<div class="t" style="left:61px;top:130px;">表单统计</div>
<svg class="abs" style="left:44px;top:149px" width="11" height="11" viewBox="0 0 11 11"><rect x=".5" y=".5" width="10" height="10" rx="1" fill="#fff" stroke="#a8a8a8"/><path d="M2.5 5.5h6M5.5 2.5v6" stroke="#555" stroke-width="1"/></svg>
<svg class="abs" style="left:62.5px;top:147.6px" width="15" height="13" viewBox="0 0 15 13"><defs><linearGradient id="fc" x1="0" y1="0" x2="0" y2="1"><stop offset="0" stop-color="#fdf0b4"/><stop offset="1" stop-color="#f0c95a"/></linearGradient></defs><path d="M.5 1.6 C.5 1 .9 .6 1.5 .6 L5.6 .6 L7 2.2 L13 2.2 C13.6 2.2 14 2.6 14 3.2 L14 11.4 C14 12 13.6 12.4 13 12.4 L1.5 12.4 C.9 12.4 .5 12 .5 11.4 Z" fill="url(#fc)" stroke="#d9b24a" stroke-width=".7"/><path d="M1 3.4h12.6" stroke="#fff7d6" stroke-width=".8"/></svg>
<div class="t" style="left:79px;top:148px;">财务审批</div>
<svg class="abs" style="left:44px;top:168px" width="11" height="11" viewBox="0 0 11 11"><rect x=".5" y=".5" width="10" height="10" rx="1" fill="#fff" stroke="#a8a8a8"/><path d="M2.5 5.5h6M5.5 2.5v6" stroke="#555" stroke-width="1"/></svg>
<svg class="abs" style="left:62.5px;top:166px" width="15" height="13" viewBox="0 0 15 13"><defs><linearGradient id="fc" x1="0" y1="0" x2="0" y2="1"><stop offset="0" stop-color="#fdf0b4"/><stop offset="1" stop-color="#f0c95a"/></linearGradient></defs><path d="M.5 1.6 C.5 1 .9 .6 1.5 .6 L5.6 .6 L7 2.2 L13 2.2 C13.6 2.2 14 2.6 14 3.2 L14 11.4 C14 12 13.6 12.4 13 12.4 L1.5 12.4 C.9 12.4 .5 12 .5 11.4 Z" fill="url(#fc)" stroke="#d9b24a" stroke-width=".7"/><path d="M1 3.4h12.6" stroke="#fff7d6" stroke-width=".8"/></svg>
<div class="t" style="left:79px;top:166.5px;">人事审批</div>
<svg class="abs" style="left:44px;top:186px" width="11" height="11" viewBox="0 0 11 11"><rect x=".5" y=".5" width="10" height="10" rx="1" fill="#fff" stroke="#a8a8a8"/><path d="M2.5 5.5h6" stroke="#555" stroke-width="1"/></svg>
<svg class="abs" style="left:60.6px;top:184px" width="17" height="13" viewBox="0 0 17 13"><defs><linearGradient id="fo" x1="0" y1="0" x2="0" y2="1"><stop offset="0" stop-color="#fdf0b4"/><stop offset="1" stop-color="#f2cf62"/></linearGradient></defs><path d="M2.6 1.4 C2.6 .8 3 .5 3.6 .5 L7.4 .5 L8.6 2 L14.6 2 C15.2 2 15.6 2.4 15.6 3 L15.6 11.6 L2.6 11.6 Z" fill="#f6dc86" stroke="#d9b24a" stroke-width=".7"/><path d="M.6 5.4 C.5 4.8 .9 4.4 1.5 4.4 L13.6 4.4 C14.2 4.4 14.7 4.8 14.8 5.4 L15.8 11.4 C15.9 12 15.5 12.4 14.9 12.4 L2.6 12.4 C2 12.4 1.6 12 1.5 11.4 Z" fill="url(#fo)" stroke="#d9b24a" stroke-width=".7"/></svg>
<div class="t" style="left:79px;top:185px;">项目管理</div>
<svg class="abs" style="left:81.6px;top:201.6px" width="12" height="14" viewBox="0 0 12 14"><defs><linearGradient id="dc" x1="0" y1="0" x2="1" y2="1"><stop offset="0" stop-color="#ffffff"/><stop offset="1" stop-color="#cfe0f8"/></linearGradient></defs><path d="M1 .8 L7.4 .8 L10.6 4 L10.6 12.6 L1 12.6 Z" fill="url(#dc)" stroke="#6f8fc8" stroke-width="1"/><path d="M7.4 .8 L7.4 4 L10.6 4" fill="#dfeafb" stroke="#6f8fc8" stroke-width=".8"/><path d="M1.6 13.2h9.6v-8" stroke="#8e99b0" stroke-width=".8" fill="none" opacity=".7"/></svg>
<div class="t" style="left:97px;top:203px;">状态分析</div>
<div class="abs" style="left:79px;top:219px;width:73px;height:18px;border:1px solid #fbb14a;background:#ffe4b0"></div>
<svg class="abs" style="left:82.6px;top:220.4px" width="12" height="14" viewBox="0 0 12 14"><defs><linearGradient id="dc" x1="0" y1="0" x2="1" y2="1"><stop offset="0" stop-color="#ffffff"/><stop offset="1" stop-color="#cfe0f8"/></linearGradient></defs><path d="M1 .8 L7.4 .8 L10.6 4 L10.6 12.6 L1 12.6 Z" fill="url(#dc)" stroke="#6f8fc8" stroke-width="1"/><path d="M7.4 .8 L7.4 4 L10.6 4" fill="#dfeafb" stroke="#6f8fc8" stroke-width=".8"/><path d="M1.6 13.2h9.6v-8" stroke="#8e99b0" stroke-width=".8" fill="none" opacity=".7"/></svg>
<div class="t" style="left:98px;top:221px;">阶段分析</div>
<svg class="abs" style="left:81.6px;top:238.8px" width="12" height="14" viewBox="0 0 12 14"><defs><linearGradient id="dc" x1="0" y1="0" x2="1" y2="1"><stop offset="0" stop-color="#ffffff"/><stop offset="1" stop-color="#cfe0f8"/></linearGradient></defs><path d="M1 .8 L7.4 .8 L10.6 4 L10.6 12.6 L1 12.6 Z" fill="url(#dc)" stroke="#6f8fc8" stroke-width="1"/><path d="M7.4 .8 L7.4 4 L10.6 4" fill="#dfeafb" stroke="#6f8fc8" stroke-width=".8"/><path d="M1.6 13.2h9.6v-8" stroke="#8e99b0" stroke-width=".8" fill="none" opacity=".7"/></svg>
<div class="t" style="left:97px;top:240px;">部门分析</div>
<svg class="abs" style="left:44px;top:260px" width="11" height="11" viewBox="0 0 11 11"><rect x=".5" y=".5" width="10" height="10" rx="1" fill="#fff" stroke="#a8a8a8"/><path d="M2.5 5.5h6M5.5 2.5v6" stroke="#555" stroke-width="1"/></svg>
<svg class="abs" style="left:62.5px;top:258px" width="15" height="13" viewBox="0 0 15 13"><defs><linearGradient id="fc" x1="0" y1="0" x2="0" y2="1"><stop offset="0" stop-color="#fdf0b4"/><stop offset="1" stop-color="#f0c95a"/></linearGradient></defs><path d="M.5 1.6 C.5 1 .9 .6 1.5 .6 L5.6 .6 L7 2.2 L13 2.2 C13.6 2.2 14 2.6 14 3.2 L14 11.4 C14 12 13.6 12.4 13 12.4 L1.5 12.4 C.9 12.4 .5 12 .5 11.4 Z" fill="url(#fc)" stroke="#d9b24a" stroke-width=".7"/><path d="M1 3.4h12.6" stroke="#fff7d6" stroke-width=".8"/></svg>
<div class="t" style="left:79px;top:259px;">销售业务管理</div>
<div class="abs" style="left:0px;top:200px;width:10px;height:120px;background:#ececec;border-top:1px solid #dcdcdc;border-bottom:1px solid #dcdcdc"></div>
<svg class="abs" style="left:1.6px;top:255.8px" width="6" height="9" viewBox="0 0 6 9"><path d="M5.4 .6 L5.4 8.4 L.6 4.5 Z" fill="#6f7f96"/></svg>
<div class="abs" style="left:238px;top:82px;width:1190px;height:674px;border-left:2px solid #b2b2b2;border-right:2px solid #b0b0b0;background:#fff"></div>
<div class="abs" style="left:240px;top:82px;width:1186px;height:44px;background:#fafafa"></div>
<div class="t" style="left:248px;top:81px;">统计结果：</div>
<svg class="abs" style="left:319px;top:83.6px" width="18" height="17" viewBox="0 0 18 17"><rect x=".6" y=".6" width="14" height="13.4" rx="2.4" fill="#f4f8fe" stroke="#8aa6d6" stroke-width="1"/><path d="M3 3.6h9.2M3 6.2h9.2M3 8.8h5" stroke="#9db3d8" stroke-width="1"/><path d="M7.6 15.6 C7.6 11.6 9.6 9.8 12.6 9.8 L12.6 7.4 L17.2 11 L12.6 14.6 L12.6 12.4 C10.4 12.2 8.8 13.2 7.6 15.6 Z" fill="#4a84e6" stroke="#2f66c8" stroke-width=".6"/></svg>
<div class="t" style="left:340px;top:86px;color:#2468c8">转发协同</div>
<svg class="abs" style="left:419px;top:83.6px" width="17" height="17" viewBox="0 0 17 17"><defs><linearGradient id="xl" x1="0" y1="0" x2="1" y2="1"><stop offset="0" stop-color="#f2faee"/><stop offset="1" stop-color="#b9dfae"/></linearGradient></defs><rect x=".7" y=".7" width="15.4" height="15.4" rx="1.4" fill="url(#xl)" stroke="#3f9a3a" stroke-width=".9"/><path d="M4.2 4 L12.4 13 M12.4 4 L4.2 13" stroke="#3c9a36" stroke-width="2.3"/><path d="M4.2 4 L8.3 8.5 L12.4 4" stroke="#7cc46e" stroke-width="1" fill="none" opacity=".7"/></svg>
<div class="t" style="left:440px;top:85px;color:#2468c8">导出<span style="font-family:'Liberation Mono',monospace;font-size:10px;letter-spacing:0">Excel</span></div>
<svg class="abs" style="left:524.6px;top:83.8px" width="17" height="16" viewBox="0 0 17 16"><defs><linearGradient id="pr" x1="0" y1="0" x2="0" y2="1"><stop offset="0" stop-color="#e4e6ea"/><stop offset="1" stop-color="#9a9ea8"/></linearGradient></defs><rect x="3.6" y=".6" width="9.6" height="7" fill="#dbe8fb" stroke="#8aa6d6" stroke-width=".9"/><path d="M.6 8 C.6 6.6 1.4 5.8 2.8 5.8 L14 5.8 C15.4 5.8 16.2 6.6 16.2 8 L16.2 12.6 L.6 12.6 Z" fill="url(#pr)" stroke="#6e727c" stroke-width=".9"/><rect x="3.2" y="10.2" width="10.4" height="5" fill="#f4f8fe" stroke="#8a8e98" stroke-width=".9"/></svg>
<div class="t" style="left:546px;top:85px;color:#2468c8">打印</div>
<div class="abs" style="left:239px;top:103px;width:45px;height:24px;border:1px solid #b8b8b8;background:#fff"></div>
<div class="abs" style="left:285px;top:103px;width:46px;height:24px;border:1px solid #b8b8b8;background:linear-gradient(180deg,#fbfbfb,#f2f2f2 50%,#e2e2e2)"></div>
<div class="abs" style="left:240px;top:126px;width:1186px;height:1px;background:#bdbdbd"></div>
<div class="t" style="left:249.5px;top:108px;">表格</div>
<div class="t" style="left:295.5px;top:108px;">图表</div>
<div class="t" style="left:240px;top:130px;width:1186px;text-align:center;font-size:20px;line-height:24px;color:#333;letter-spacing:-.3px">阶段分析</div>
<div class="t" style="left:1029px;top:154px;">表单名称：项目信息档案</div>
<div class="t" style="left:1029px;top:170px;">统计日期：2013-08-02</div>
<div class="abs" style="left:240px;top:186px;width:1186px;height:26px;background:linear-gradient(180deg,#ffffff,#f6f6f6 45%,#e7e7e7)"></div>
<div class="abs" style="left:240px;top:186px;width:1186px;height:1px;background:#d4d4d4"></div>
<div class="abs" style="left:240px;top:211px;width:1186px;height:1px;background:#d9d9d9"></div>
<div class="abs" style="left:240px;top:236px;width:1186px;height:1px;background:#d9d9d9"></div>
<div class="abs" style="left:240px;top:261px;width:1186px;height:1px;background:#d9d9d9"></div>
<div class="abs" style="left:240px;top:286px;width:1186px;height:1px;background:#d9d9d9"></div>
<div class="abs" style="left:240px;top:311px;width:1186px;height:1px;background:#d9d9d9"></div>
<div class="abs" style="left:240px;top:336px;width:1186px;height:1px;background:#d9d9d9"></div>
<div class="abs" style="left:510px;top:186px;width:1px;height:151px;background:#d2d2d2"></div>
<div class="abs" style="left:511px;top:187px;width:1px;height:24px;background:rgba(255,255,255,.8)"></div>
<div class="abs" style="left:702px;top:186px;width:1px;height:151px;background:#d2d2d2"></div>
<div class="abs" style="left:703px;top:187px;width:1px;height:24px;background:rgba(255,255,255,.8)"></div>
<div class="abs" style="left:921px;top:186px;width:1px;height:151px;background:#d2d2d2"></div>
<div class="abs" style="left:922px;top:187px;width:1px;height:24px;background:rgba(255,255,255,.8)"></div>
<div class="abs" style="left:1153px;top:186px;width:1px;height:151px;background:#d2d2d2"></div>
<div class="abs" style="left:1154px;top:187px;width:1px;height:24px;background:rgba(255,255,255,.8)"></div>
<div class="abs" style="left:1425px;top:186px;width:1px;height:151px;background:#d2d2d2"></div>
<div class="abs" style="left:1426px;top:187px;width:1px;height:24px;background:rgba(255,255,255,.8)"></div>
<div class="t" style="left:275px;top:191px;width:200px;text-align:center;">当前项目阶段</div>
<div class="t" style="left:506.5px;top:191px;width:200px;text-align:center;">项目名称</div>
<div class="t" style="left:712px;top:191px;width:200px;text-align:center;">预算金额</div>
<div class="t" style="left:937.5px;top:191px;width:200px;text-align:center;">已付款金额</div>
<div class="t" style="left:1189px;top:191px;width:200px;text-align:center;">项目尾款金额</div>
<div class="t" style="left:275px;top:216px;width:200px;text-align:center;color:#000">规划阶段</div>
<div class="t" style="left:506.5px;top:217px;width:200px;text-align:center;color:#2f6fc6">2</div>
<div class="t" style="left:712px;top:217px;width:200px;text-align:center;color:#2f6fc6">2000000.00</div>
<div class="t" style="left:937.5px;top:217px;width:200px;text-align:center;color:#2f6fc6">0.00</div>
<div class="t" style="left:1189px;top:217px;width:200px;text-align:center;color:#2f6fc6">2000000.00</div>
<div class="t" style="left:275px;top:241px;width:200px;text-align:center;color:#000">立项阶段</div>
<div class="t" style="left:506.5px;top:242px;width:200px;text-align:center;color:#2f6fc6">1</div>
<div class="t" style="left:712px;top:242px;width:200px;text-align:center;color:#2f6fc6">5000000.00</div>
<div class="t" style="left:937.5px;top:242px;width:200px;text-align:center;color:#2f6fc6">0.00</div>
<div class="t" style="left:1189px;top:242px;width:200px;text-align:center;color:#2f6fc6">5000000.00</div>
<div class="t" style="left:275px;top:266px;width:200px;text-align:center;color:#000">执行阶段</div>
<div class="t" style="left:506.5px;top:267px;width:200px;text-align:center;color:#2f6fc6">1</div>
<div class="t" style="left:712px;top:267px;width:200px;text-align:center;color:#2f6fc6">100000.00</div>
<div class="t" style="left:937.5px;top:267px;width:200px;text-align:center;color:#2f6fc6">0.00</div>
<div class="t" style="left:1189px;top:267px;width:200px;text-align:center;color:#2f6fc6">100000.00</div>
<div class="t" style="left:275px;top:291px;width:200px;text-align:center;color:#000">验收阶段</div>
<div class="t" style="left:506.5px;top:292px;width:200px;text-align:center;color:#2f6fc6">2</div>
<div class="t" style="left:712px;top:292px;width:200px;text-align:center;color:#2f6fc6">0.00</div>
<div class="t" style="left:937.5px;top:292px;width:200px;text-align:center;color:#2f6fc6">10000.00</div>
<div class="t" style="left:1189px;top:292px;width:200px;text-align:center;color:#2f6fc6">-10000.00</div>
<div class="t" style="left:275px;top:316px;width:200px;text-align:center;color:#000">合计</div>
<div class="t" style="left:506.5px;top:317px;width:200px;text-align:center;color:#000">6</div>
<div class="t" style="left:712px;top:317px;width:200px;text-align:center;color:#000">7100000.00</div>
<div class="t" style="left:937.5px;top:317px;width:200px;text-align:center;color:#000">10000.00</div>
<div class="t" style="left:1189px;top:317px;width:200px;text-align:center;color:#000">7090000.00</div></div>
<div class="abs" style="left:1564px;top:81px;width:30px;height:99.5px;background:linear-gradient(90deg,#e9e9e9,#fafafa 5px,#fafafa)"></div>
<div class="t" style="left:1564px;top:92px;width:32px;text-align:center;color:#000;">领</div>
<div class="t" style="left:1564px;top:108px;width:32px;text-align:center;color:#000;">导</div>
<div class="t" style="left:1564px;top:124px;width:32px;text-align:center;color:#000;">空</div>
<div class="t" style="left:1564px;top:140px;width:32px;text-align:center;color:#000;">间</div>
<div class="abs" style="left:1564px;top:185.5px;width:30px;height:100px;background:#3c78c2"></div>
<div class="t" style="left:1564px;top:197px;width:32px;text-align:center;color:#fff;">单</div>
<div class="t" style="left:1564px;top:213px;width:32px;text-align:center;color:#fff;">位</div>
<div class="t" style="left:1564px;top:229px;width:32px;text-align:center;color:#fff;">空</div>
<div class="t" style="left:1564px;top:245px;width:32px;text-align:center;color:#fff;">间</div>
<div class="abs" style="left:1564px;top:290.5px;width:30px;height:100px;background:#3c78c2"></div>
<div class="t" style="left:1564px;top:302px;width:32px;text-align:center;color:#fff;">集</div>
<div class="t" style="left:1564px;top:318px;width:32px;text-align:center;color:#fff;">团</div>
<div class="t" style="left:1564px;top:334px;width:32px;text-align:center;color:#fff;">空</div>
<div class="t" style="left:1564px;top:350px;width:32px;text-align:center;color:#fff;">间</div>
<div class="abs" style="left:1564px;top:395.5px;width:30px;height:100px;background:#3c78c2"></div>
<div class="t" style="left:1564px;top:408px;width:32px;text-align:center;color:#fff;font-family:'Liberation Mono','WenQuanYi Zen Hei',monospace;font-size:10px;">C</div>
<div class="t" style="left:1564px;top:424px;width:32px;text-align:center;color:#fff;font-family:'Liberation Mono','WenQuanYi Zen Hei',monospace;font-size:10px;">R</div>
<div class="t" style="left:1564px;top:440px;width:32px;text-align:center;color:#fff;font-family:'Liberation Mono','WenQuanYi Zen Hei',monospace;font-size:10px;">M</div>
<div class="t" style="left:1564px;top:456px;width:32px;text-align:center;color:#fff;">平</div>
<div class="t" style="left:1564px;top:472px;width:32px;text-align:center;color:#fff;">台</div>
<div class="abs" style="left:1564px;top:500.5px;width:30px;height:39.5px;background:#3c78c2"></div>
<svg class="abs" style="left:1573px;top:514px" width="12" height="12" viewBox="0 0 12 12"><path d="M1.4 1.6 L5.4 6 L1.4 10.4 M6.4 1.6 L10.4 6 L6.4 10.4" fill="none" stroke="#fff" stroke-width="1.5"/></svg>
<div id="botstrip" class="abs"></div>
</body>
</html>
